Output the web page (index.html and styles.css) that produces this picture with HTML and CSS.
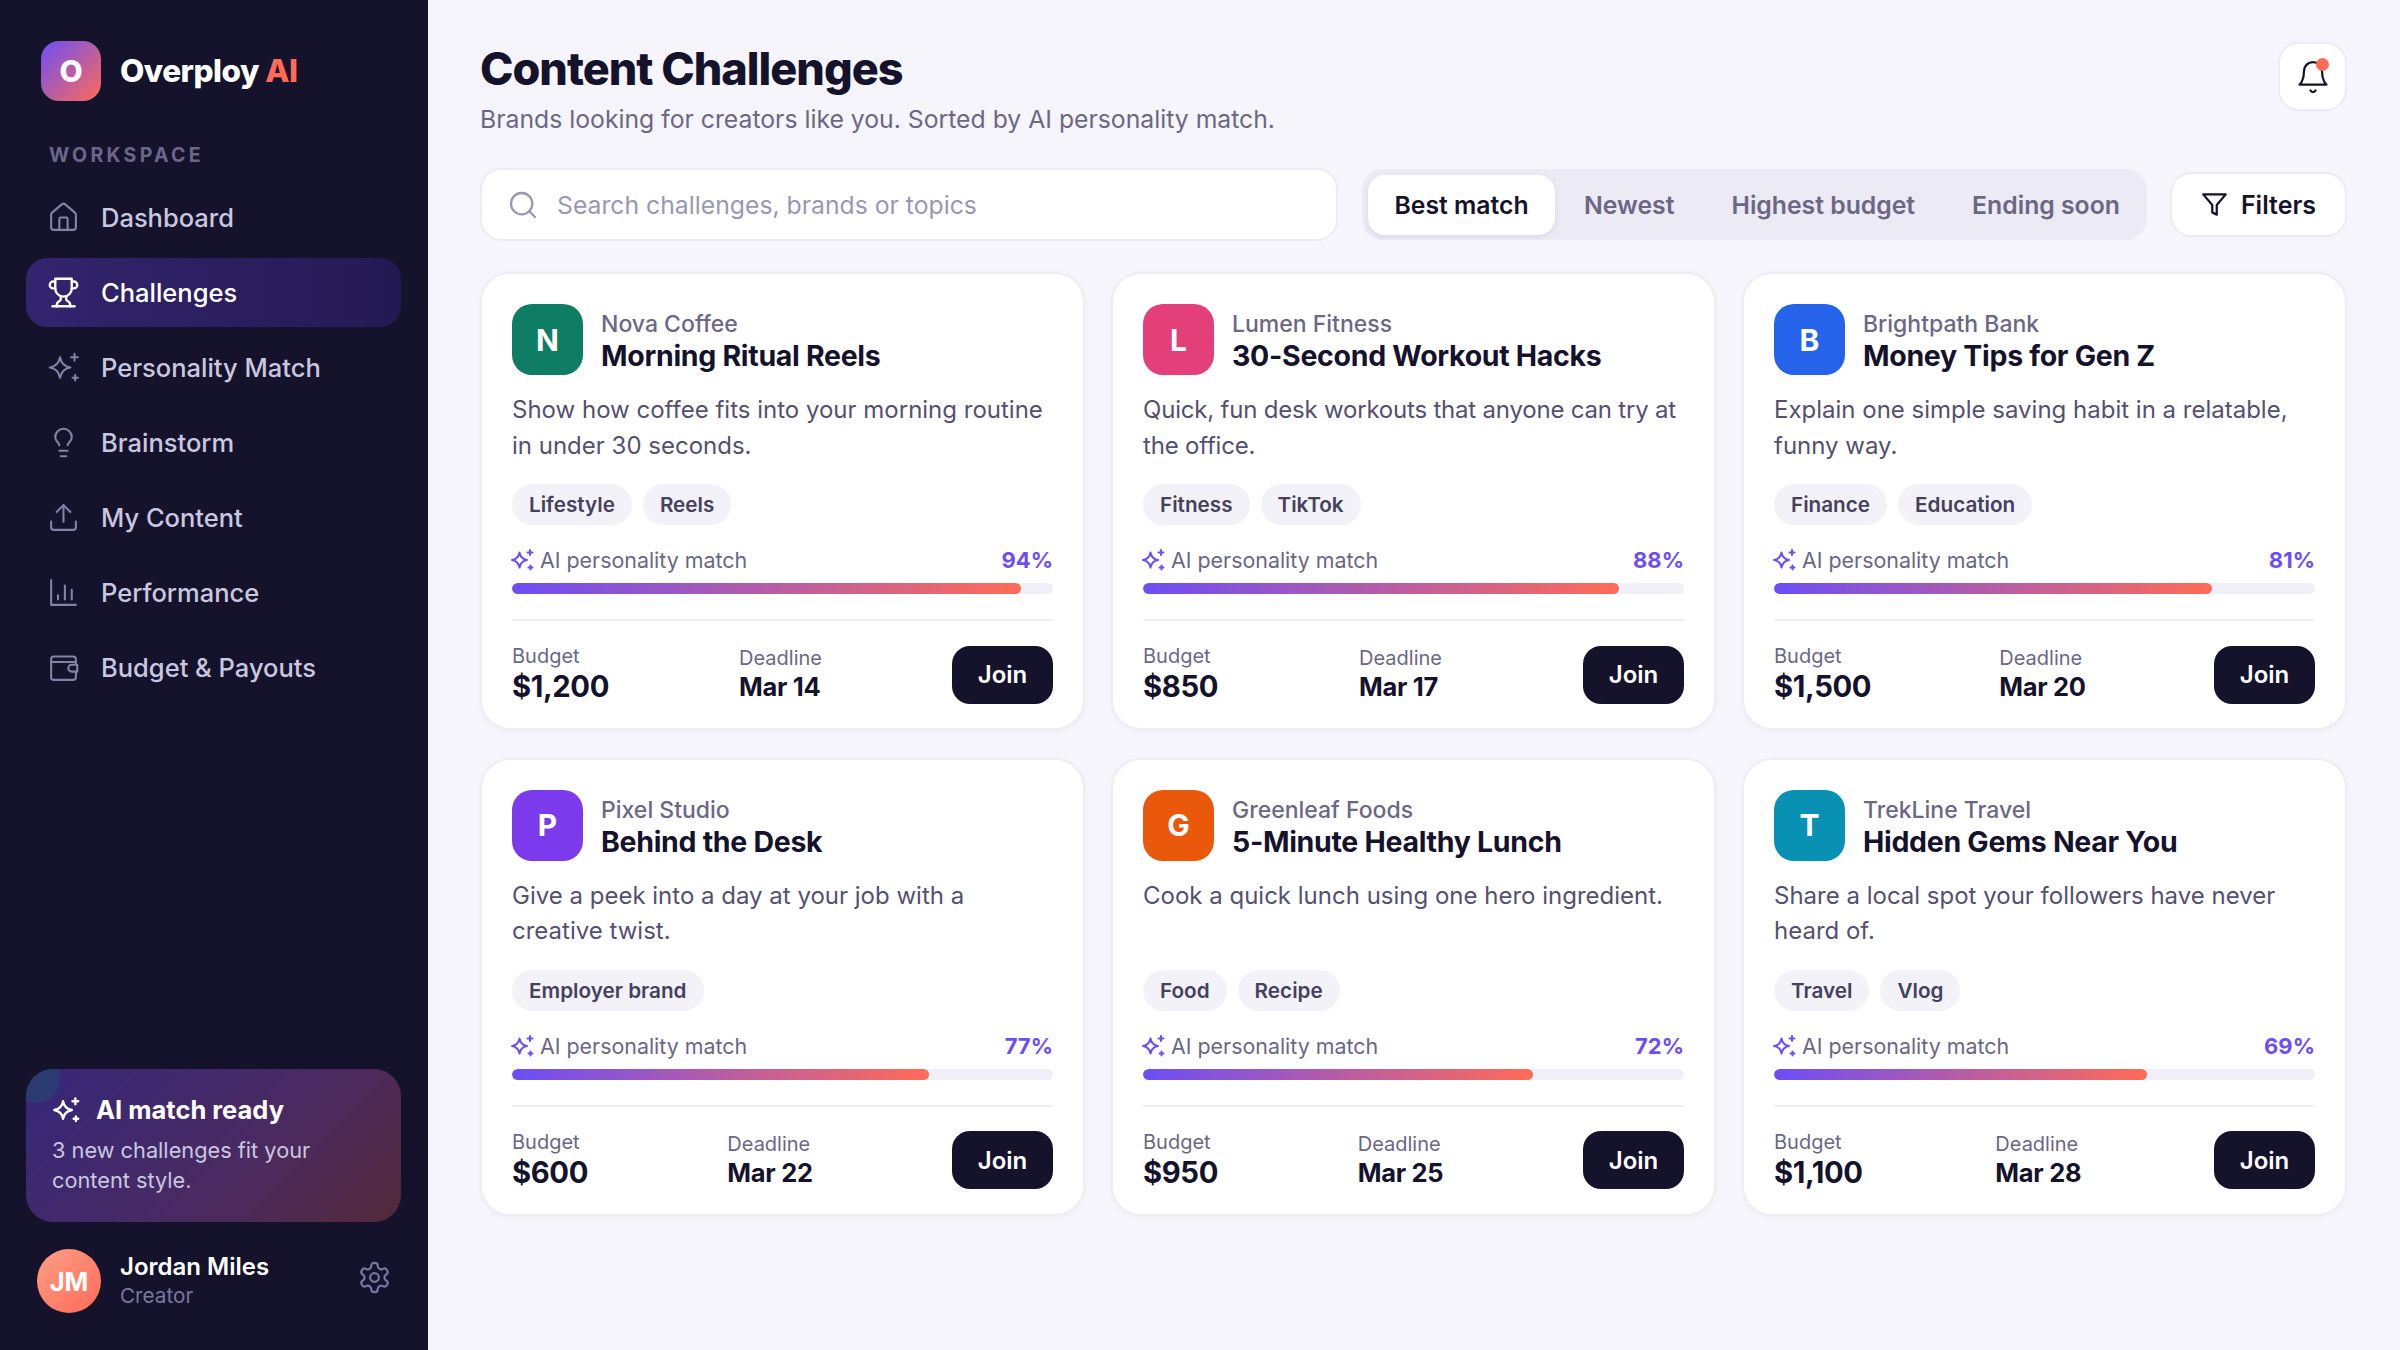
FILE: index.html
```html
<!DOCTYPE html>
<html lang="en">
<head>
<meta charset="utf-8">
<title>Overploy AI - Content Challenges</title>
<link rel="stylesheet" href="styles.css">
</head>
<body>
<svg class="defs" aria-hidden="true">
  <symbol id="i-home" viewBox="0 0 24 24"><path d="M15 21v-8a1 1 0 0 0-1-1h-4a1 1 0 0 0-1 1v8"/><path d="M3 10a2 2 0 0 1 .709-1.528l7-5.999a2 2 0 0 1 2.582 0l7 5.999A2 2 0 0 1 21 10v9a2 2 0 0 1-2 2H5a2 2 0 0 1-2-2z"/></symbol>
  <symbol id="i-trophy" viewBox="0 0 24 24"><path d="M6 9H4.500a2.500 2.500 0 0 1 0-5H6"/><path d="M18 9h1.500a2.500 2.500 0 0 0 0-5H18"/><path d="M4 22h16"/><path d="M10 14.660V17c0 .55-.47.98-.97 1.210C7.850 18.750 7 20.240 7 22"/><path d="M14 14.660V17c0 .55.47.98.97 1.210C16.150 18.750 17 20.240 17 22"/><path d="M18 2H6v7a6 6 0 0 0 12 0V2Z"/></symbol>
  <symbol id="i-spark" viewBox="0 0 24 24"><path d="M9.500 4.500c.8 4.600 2.900 6.800 7.500 7.500-4.600.8-6.700 3-7.500 7.500-.8-4.500-2.900-6.700-7.500-7.500 4.600-.7 6.700-2.900 7.500-7.500z"/><path d="M20 2v5"/><path d="M17.500 4.500h5"/><path d="M20.500 17.500v4"/><path d="M18.500 19.500h4"/></symbol>
  <symbol id="i-bulb" viewBox="0 0 24 24"><path d="M15 14c.2-1 .7-1.700 1.500-2.500 1-.9 1.500-2.200 1.500-3.500A6 6 0 0 0 6 8c0 1 .2 2.200 1.500 3.500.7.7 1.300 1.500 1.500 2.500"/><path d="M9 18h6"/><path d="M10 22h4"/></symbol>
  <symbol id="i-upload" viewBox="0 0 24 24"><path d="M21 15v4a2 2 0 0 1-2 2H5a2 2 0 0 1-2-2v-4"/><path d="M17 8l-5-5-5 5"/><path d="M12 3v12"/></symbol>
  <symbol id="i-chart" viewBox="0 0 24 24"><path d="M3 3v18h18"/><path d="M8 17v-3"/><path d="M13 17V7"/><path d="M18 17v-7"/></symbol>
  <symbol id="i-wallet" viewBox="0 0 24 24"><path d="M21 9V6a2 2 0 0 0-2-2H5a2 2 0 0 0-2 2v13a2 2 0 0 0 2 2h14a2 2 0 0 0 2-2v-3"/><path d="M3 8h18"/><path d="M22 10h-4a2.500 2.500 0 0 0 0 5h4z"/></symbol>
  <symbol id="i-gear" viewBox="0 0 24 24"><path d="M12.220 2h-.44a2 2 0 0 0-2 2v.18a2 2 0 0 1-1 1.730l-.43.25a2 2 0 0 1-2 0l-.15-.08a2 2 0 0 0-2.730.73l-.22.38a2 2 0 0 0 .73 2.730l.15.1a2 2 0 0 1 1 1.720v.51a2 2 0 0 1-1 1.740l-.15.09a2 2 0 0 0-.73 2.730l.22.38a2 2 0 0 0 2.730.73l.15-.08a2 2 0 0 1 2 0l.43.25a2 2 0 0 1 1 1.730V20a2 2 0 0 0 2 2h.44a2 2 0 0 0 2-2v-.18a2 2 0 0 1 1-1.730l.43-.25a2 2 0 0 1 2 0l.15.08a2 2 0 0 0 2.730-.73l.22-.39a2 2 0 0 0-.73-2.730l-.15-.08a2 2 0 0 1-1-1.740v-.5a2 2 0 0 1 1-1.740l.15-.09a2 2 0 0 0 .73-2.730l-.22-.38a2 2 0 0 0-2.730-.73l-.15.08a2 2 0 0 1-2 0l-.43-.25a2 2 0 0 1-1-1.730V4a2 2 0 0 0-2-2z"/><circle cx="12" cy="12" r="3"/></symbol>
  <symbol id="i-bell" viewBox="0 0 24 24"><path d="M6 8a6 6 0 0 1 12 0c0 7 3 9 3 9H3s3-2 3-9"/><path d="M10.300 21a1.940 1.940 0 0 0 3.400 0"/></symbol>
  <symbol id="i-filter" viewBox="0 0 24 24"><path d="M22 3H2l8 9.460V19l4 2v-8.540z"/></symbol>
  <symbol id="i-search" viewBox="0 0 24 24"><circle cx="11" cy="11" r="8"/><path d="m21 21-4.300-4.300"/></symbol>
</svg>
<div class="app">
  <aside class="sidebar">
    <div class="brand">
      <div class="brand-logo">O</div>
      <div class="brand-name">Overploy <span class="brand-ai">AI</span></div>
    </div>
    <div class="nav-label">WORKSPACE</div>
    <nav class="nav">
      <a class="nav-item"><svg class="nav-icon"><use href="#i-home"/></svg>Dashboard</a>
      <a class="nav-item active"><svg class="nav-icon"><use href="#i-trophy"/></svg>Challenges</a>
      <a class="nav-item"><svg class="nav-icon"><use href="#i-spark"/></svg>Personality Match</a>
      <a class="nav-item"><svg class="nav-icon"><use href="#i-bulb"/></svg>Brainstorm</a>
      <a class="nav-item"><svg class="nav-icon"><use href="#i-upload"/></svg>My Content</a>
      <a class="nav-item"><svg class="nav-icon"><use href="#i-chart"/></svg>Performance</a>
      <a class="nav-item"><svg class="nav-icon"><use href="#i-wallet"/></svg>Budget &amp; Payouts</a>
    </nav>
    <div class="promo">
      <div class="promo-blob"></div>
      <div class="promo-title"><svg class="promo-icon"><use href="#i-spark"/></svg>AI match ready</div>
      <div class="promo-text">3 new challenges fit your content style.</div>
    </div>
    <div class="user">
      <div class="avatar">JM</div>
      <div class="user-info">
        <div class="user-name">Jordan Miles</div>
        <div class="user-role">Creator</div>
      </div>
      <svg class="gear"><use href="#i-gear"/></svg>
    </div>
  </aside>
  <main class="main">
    <header class="header">
      <div>
        <h1 class="title">Content Challenges</h1>
        <p class="subtitle">Brands looking for creators like you. Sorted by AI personality match.</p>
      </div>
      <button class="bell"><svg class="bell-icon"><use href="#i-bell"/></svg><span class="bell-dot"></span></button>
    </header>
    <div class="toolbar">
      <div class="search"><svg class="search-icon"><use href="#i-search"/></svg><span class="search-text">Search challenges, brands or topics</span></div>
      <div class="segments">
        <span class="segment on">Best match</span>
        <span class="segment">Newest</span>
        <span class="segment">Highest budget</span>
        <span class="segment">Ending soon</span>
      </div>
      <button class="filters"><svg class="filter-icon"><use href="#i-filter"/></svg>Filters</button>
    </div>
    <section class="grid">
      <article class="card">
        <div class="card-head"><div class="logo green">N</div><div class="head-text"><div class="company">Nova Coffee</div><h2 class="card-title">Morning Ritual Reels</h2></div></div>
        <p class="desc">Show how coffee fits into your morning routine in under 30 seconds.</p>
        <div class="tags"><span class="tag">Lifestyle</span><span class="tag">Reels</span></div>
        <div class="match"><span class="match-label"><svg class="match-icon"><use href="#i-spark"/></svg>AI personality match</span><span class="match-val">94%</span></div>
        <div class="bar"><div class="fill" style="width:94%"></div></div>
        <div class="foot"><div><div class="meta-label">Budget</div><div class="budget">$1,200</div></div><div><div class="meta-label">Deadline</div><div class="deadline">Mar 14</div></div><button class="join">Join</button></div>
      </article>
      <article class="card">
        <div class="card-head"><div class="logo pink">L</div><div class="head-text"><div class="company">Lumen Fitness</div><h2 class="card-title">30-Second Workout Hacks</h2></div></div>
        <p class="desc tight">Quick, fun desk workouts that anyone can try at the office.</p>
        <div class="tags"><span class="tag">Fitness</span><span class="tag">TikTok</span></div>
        <div class="match"><span class="match-label"><svg class="match-icon"><use href="#i-spark"/></svg>AI personality match</span><span class="match-val">88%</span></div>
        <div class="bar"><div class="fill" style="width:88%"></div></div>
        <div class="foot"><div><div class="meta-label">Budget</div><div class="budget">$850</div></div><div><div class="meta-label">Deadline</div><div class="deadline">Mar 17</div></div><button class="join">Join</button></div>
      </article>
      <article class="card">
        <div class="card-head"><div class="logo blue">B</div><div class="head-text"><div class="company">Brightpath Bank</div><h2 class="card-title">Money Tips for Gen Z</h2></div></div>
        <p class="desc">Explain one simple saving habit in a relatable, funny way.</p>
        <div class="tags"><span class="tag">Finance</span><span class="tag">Education</span></div>
        <div class="match"><span class="match-label"><svg class="match-icon"><use href="#i-spark"/></svg>AI personality match</span><span class="match-val">81%</span></div>
        <div class="bar"><div class="fill" style="width:81%"></div></div>
        <div class="foot"><div><div class="meta-label">Budget</div><div class="budget">$1,500</div></div><div><div class="meta-label">Deadline</div><div class="deadline">Mar 20</div></div><button class="join">Join</button></div>
      </article>
      <article class="card">
        <div class="card-head"><div class="logo violet">P</div><div class="head-text"><div class="company">Pixel Studio</div><h2 class="card-title">Behind the Desk</h2></div></div>
        <p class="desc">Give a peek into a day at your job with a creative twist.</p>
        <div class="tags"><span class="tag">Employer brand</span></div>
        <div class="match"><span class="match-label"><svg class="match-icon"><use href="#i-spark"/></svg>AI personality match</span><span class="match-val">77%</span></div>
        <div class="bar"><div class="fill" style="width:77%"></div></div>
        <div class="foot"><div><div class="meta-label">Budget</div><div class="budget">$600</div></div><div><div class="meta-label">Deadline</div><div class="deadline">Mar 22</div></div><button class="join">Join</button></div>
      </article>
      <article class="card">
        <div class="card-head"><div class="logo orange">G</div><div class="head-text"><div class="company">Greenleaf Foods</div><h2 class="card-title">5-Minute Healthy Lunch</h2></div></div>
        <p class="desc">Cook a quick lunch using one hero ingredient.</p>
        <div class="tags"><span class="tag">Food</span><span class="tag">Recipe</span></div>
        <div class="match"><span class="match-label"><svg class="match-icon"><use href="#i-spark"/></svg>AI personality match</span><span class="match-val">72%</span></div>
        <div class="bar"><div class="fill" style="width:72%"></div></div>
        <div class="foot"><div><div class="meta-label">Budget</div><div class="budget">$950</div></div><div><div class="meta-label">Deadline</div><div class="deadline">Mar 25</div></div><button class="join">Join</button></div>
      </article>
      <article class="card">
        <div class="card-head"><div class="logo teal">T</div><div class="head-text"><div class="company">TrekLine Travel</div><h2 class="card-title">Hidden Gems Near You</h2></div></div>
        <p class="desc">Share a local spot your followers have never heard of.</p>
        <div class="tags"><span class="tag">Travel</span><span class="tag">Vlog</span></div>
        <div class="match"><span class="match-label"><svg class="match-icon"><use href="#i-spark"/></svg>AI personality match</span><span class="match-val">69%</span></div>
        <div class="bar"><div class="fill" style="width:69%"></div></div>
        <div class="foot"><div><div class="meta-label">Budget</div><div class="budget">$1,100</div></div><div><div class="meta-label">Deadline</div><div class="deadline">Mar 28</div></div><button class="join">Join</button></div>
      </article>
    </section>
  </main>
</div>
</body>
</html>
```

FILE: styles.css
```css
* { box-sizing: border-box; }
html, body { margin: 0; height: 100%; }
body { font-family: Inter, "Liberation Sans", sans-serif; background: #f6f5fb; color: #15132b; overflow: hidden; }
.defs { position: absolute; width: 0; height: 0; }
svg { fill: none; stroke: currentColor; stroke-width: 2; stroke-linecap: round; stroke-linejoin: round; }
.app { display: flex; height: 1350px; }

.sidebar { width: 428px; flex: none; background: #15132b; padding: 41px 27px 37px 26px; display: flex; flex-direction: column; }
.brand { display: flex; align-items: center; gap: 19px; padding-left: 15px; height: 60px; }
.brand-logo { width: 60px; height: 60px; border-radius: 18px; background: linear-gradient(135deg, #6c4ef6, #ff6b57); color: #fff; font-size: 30px; font-weight: 800; display: flex; align-items: center; justify-content: center; }
.brand-name { font-size: 31.500px; line-height: 58px; font-weight: 800; color: #fff; letter-spacing: -0.5px; }
.brand-ai { color: #ff6b57; }
.nav-label { margin: 43px 0 0 23px; font-size: 19.500px; line-height: 22px; font-weight: 700; letter-spacing: 3.300px; color: #6a668c; }
.nav { margin-top: 17px; display: flex; flex-direction: column; gap: 6px; }
.nav-item { height: 69px; border-radius: 21px; padding-left: 21px; display: flex; align-items: center; gap: 21px; font-size: 25.500px; font-weight: 500; color: #c9c7e0; }
.nav-item.active { background: linear-gradient(90deg, #33246f, #241a52); color: #fff; }
.nav-icon { width: 33px; height: 33px; flex: none; color: #8582a6; stroke-width: 1.500; }
.active .nav-icon { color: #fff; stroke-width: 1.700; }

.promo { position: relative; overflow: hidden; margin-top: auto; height: 153px; border-radius: 27px; padding: 24px 26px; background: linear-gradient(135deg, #35277a 0%, #4b2a60 60%, #532a3a 100%); }
.promo-blob { position: absolute; left: -14px; top: -14px; width: 48px; height: 48px; border-radius: 50%; background: #2c3a73; }
.promo-title { position: relative; display: flex; align-items: center; gap: 16px; font-size: 25.500px; line-height: 34px; font-weight: 700; color: #fff; }
.promo-icon { width: 28px; height: 28px; stroke-width: 2; }
.promo-text { position: relative; margin-top: 8px; font-size: 21.750px; line-height: 30px; color: #c9c7e0; }

.user { margin-top: 27px; display: flex; align-items: center; gap: 19px; padding: 0 9px 0 11px; }
.avatar { width: 64px; height: 64px; flex: none; border-radius: 50%; background: linear-gradient(135deg, #ff9e85, #ff6b57); color: #fff; font-size: 25.500px; font-weight: 700; display: flex; align-items: center; justify-content: center; }
.user-info { flex: 1; }
.user-name { font-size: 24px; line-height: 30px; font-weight: 600; color: #fff; }
.user-role { font-size: 20.700px; line-height: 28px; color: #7a76a0; }
.gear { width: 35px; height: 35px; color: #7a76a0; margin-top: -8px; stroke-width: 1.500; }

.main { flex: 1; min-width: 0; padding: 41px 53px 0 52px; }
.header { display: flex; justify-content: space-between; align-items: flex-start; height: 127px; }
.title { margin: 0; font-size: 45px; line-height: 56px; font-weight: 800; letter-spacing: -1px; color: #15132b; }
.subtitle { margin: 5px 0 0; font-size: 24.750px; line-height: 34px; color: #6b6785; }
.bell { position: relative; margin-top: 1px; width: 69px; height: 69px; border: 2px solid #eceaf4; border-radius: 21px; background: #fff; padding: 0; color: #15132b; display: flex; align-items: center; justify-content: center; }
.bell-icon { width: 36px; height: 36px; stroke-width: 1.500; }
.bell-dot { position: absolute; right: 16px; top: 14px; width: 13px; height: 13px; border-radius: 50%; background: #ff6b57; }

.toolbar { display: flex; align-items: center; margin-bottom: 31px; }
.search { width: 858px; height: 73px; background: #fff; border: 2px solid #eceaf4; border-radius: 21px; padding: 0 0 0 25px; display: flex; align-items: center; gap: 18px; }
.search-icon { width: 32px; height: 32px; color: #9a97b5; stroke-width: 1.700; }
.search-text { font-size: 24.750px; color: #9a97b5; white-space: nowrap; }
.segments { margin-left: 24px; height: 71px; width: 785px; background: #eceaf4; border-radius: 21px; padding: 5px 6px; display: flex; align-items: center; gap: 1px; }
.segment { flex: none; height: 60px; padding: 0 28px; border-radius: 17px; display: flex; align-items: center; justify-content: center; font-size: 24.750px; font-weight: 600; color: #6b6785; white-space: nowrap; }
.segment.on { width: 187px; padding: 0; background: #fff; color: #15132b; box-shadow: 0 2px 6px rgba(21,19,43,.08); }
.filters { margin-left: 23px; width: 177px; height: 65px; border: 2px solid #eceaf4; border-radius: 21px; background: #fff; color: #15132b; display: flex; align-items: center; justify-content: center; gap: 13px; font-family: inherit; font-size: 25px; font-weight: 600; padding: 0; }
.filter-icon { width: 27px; height: 27px; }

.grid { display: grid; grid-template-columns: repeat(3, 1fr); gap: 27.500px 26px; }
.card { height: 458px; background: #fff; border: 2px solid #eeedf6; border-radius: 30px; padding: 30px 30px 0; box-shadow: 0 2px 6px rgba(21,19,43,.03); }
.card-head { display: flex; align-items: flex-start; gap: 18px; }
.head-text { padding-top: 5px; }
.logo { width: 71px; height: 71px; flex: none; border-radius: 20px; color: #fff; font-size: 30px; font-weight: 700; display: flex; align-items: center; justify-content: center; }
.green { background: #0f7d63; }
.pink { background: #e3407a; }
.blue { background: #2563eb; }
.violet { background: #7c3aed; }
.orange { background: #ea580c; }
.teal { background: #0891b2; }
.company { font-size: 23px; line-height: 30px; font-weight: 500; color: #6b6785; }
.card-title { margin: 0; font-size: 28.500px; line-height: 34px; font-weight: 700; letter-spacing: -.3px; color: #15132b; }
.desc { margin: 17px 0 0; height: 71px; font-size: 24px; line-height: 35.500px; color: #55506f; }
.desc.tight { letter-spacing: -.2px; }
.tags { margin-top: 21px; display: flex; gap: 11px; }
.tag { height: 41px; padding: 0 17px; border-radius: 21px; background: #f3f2f8; display: flex; align-items: center; font-size: 20.700px; font-weight: 600; color: #45415f; }
.match { margin-top: 19px; display: flex; justify-content: space-between; align-items: center; height: 32px; }
.match-label { display: flex; align-items: center; gap: 6px; font-size: 21.400px; color: #6b6785; }
.match-icon { width: 24px; height: 24px; color: #6c4ef6; margin-left: -2px; }
.match-val { font-size: 22px; font-weight: 700; color: #6c4ef6; }
.bar { margin-top: 7px; height: 11px; border-radius: 6px; background: #f0eff7; overflow: hidden; }
.fill { height: 100%; border-radius: 6px; background: linear-gradient(90deg, #6c4ef6, #ff6b57); }
.foot { margin-top: 25px; border-top: 2px solid #f0eff7; padding-top: 23px; display: flex; justify-content: space-between; align-items: center; }
.meta-label { font-size: 20px; line-height: 24px; color: #6b6785; }
.budget { font-size: 29.250px; line-height: 37px; font-weight: 700; color: #15132b; letter-spacing: -.4px; }
.deadline { font-size: 25.500px; line-height: 33px; font-weight: 700; color: #15132b; letter-spacing: -.3px; }
.join { width: 101px; height: 58px; border: 0; border-radius: 18px; background: #15132b; color: #fff; font-family: inherit; font-size: 24px; font-weight: 600; padding: 0; }
```
